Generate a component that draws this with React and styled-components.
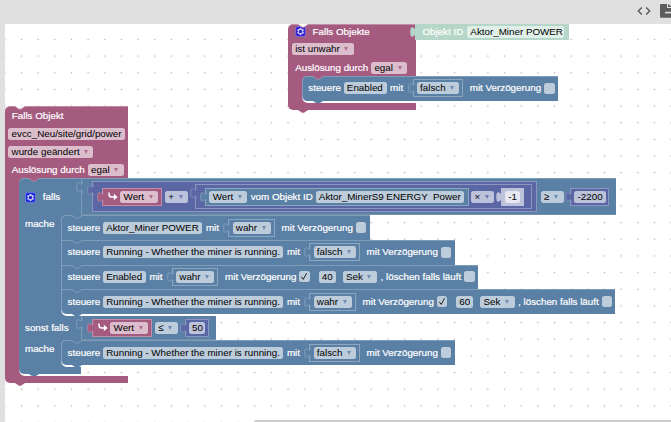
import React from 'react'
import styled, { createGlobalStyle } from 'styled-components'

const PINK = '#a55b80'
const BLUE = '#5b80a5'
const VIOLET = '#5b67a5'
const LIGHT = {
  [PINK]: '#c08ca6',
  [BLUE]: '#8ca6c0',
  [VIOLET]: '#8c95c0',
  '#bdc2db': '#bdc2db',
  '#b5d6c8': '#b5d6c8',
}

const GlobalStyle = createGlobalStyle`
  * { box-sizing: border-box; }
  body {
    margin: 0;
    overflow: hidden;
    font-family: "Liberation Sans", Arial, sans-serif;
    font-size: 9.8px;
    line-height: 12px;
  }
`
const Page = styled.div`
  display: flex;
  flex-direction: column;
  width: 671px;
  height: 422px;
  background: #e0e0e0;
`
const Toolbar = styled.div`
  display: flex;
  flex: none;
  height: 23.5px;
  padding-left: 636px;
  overflow: hidden;
`
const CodeIcon = styled.svg`
  flex: none;
  width: 16px;
  height: 16px;
  margin-top: 3px;
`
const FileIcon = styled.svg`
  flex: none;
  width: 16px;
  height: 16px;
  margin: 3px 0 0 8px;
`
const Workspace = styled.div`
  position: relative;
  flex: 1;
  margin-left: 5px;
  overflow: hidden;
  background-color: #fff;
  background-image: radial-gradient(circle at center, #bbb 0, #d4d4d4 0.7px, transparent 1.2px);
  background-size: 16.667px 16.667px;
  background-position: 8.2px 7.1px;
`
const ScrollBar = styled.div`
  position: absolute;
  left: 249px;
  right: 0;
  bottom: 0;
  height: 2px;
  border-radius: 2px 0 0 0;
  background: #ccc;
`
const Stack = styled.div`
  position: absolute;
  left: ${(p) => p.$x}px;
  top: ${(p) => p.$y}px;
  display: flex;
  flex-direction: column;
  align-items: flex-start;
  white-space: pre;
`
const HatBody = styled.div`
  position: relative;
  width: ${(p) => p.$w}px;
  background: ${PINK};
  border-top: 1px solid ${LIGHT[PINK]};
  border-top-left-radius: 5px;
`
const HatRow = styled.div`
  display: flex;
  align-items: center;
  height: ${(p) => p.$h}px;
  padding-left: ${(p) => p.$pl}px;
`
const Arm = styled.div`
  position: relative;
  width: ${(p) => p.$w}px;
  height: ${(p) => p.$h || 7}px;
  background: ${(p) => p.$color};
  border-bottom-left-radius: 5px;
`
const Mouth = styled.div`
  display: flex;
`
const Side = styled.div`
  flex: none;
  width: ${(p) => p.$w}px;
  padding: 3px 0 0 6.5px;
  background: ${(p) => p.$color};
  color: #fff;
  -webkit-text-stroke: 0.2px #fff;
`
const Inner = styled.div`
  position: relative;
  display: flex;
  flex-direction: column;
  align-items: flex-start;
  padding-bottom: 2px;
`
const CornerSvg = styled.svg`
  position: absolute;
  left: 0;
  width: 6px;
  height: 6px;
  ${(p) => (p.$top ? 'top: 0;' : 'bottom: 0;')}
`
const StatementBox = styled.div`
  position: relative;
  display: flex;
  align-items: center;
  height: ${(p) => p.$h}px;
  padding: 0 3.2px 1px 5.6px;
  background: ${BLUE};
  border-top: 1px solid #7f9cb9;
  border-left: 1px solid #7f9cb9;
  border-radius: ${(p) => (p.$first ? '5px' : '0')} 0 0 ${(p) => (p.$last ? '5px' : '0')};
`
const IfBox = styled.div`
  position: relative;
  display: flex;
  flex-direction: column;
  align-items: flex-start;
`
const IfHead = styled.div`
  position: relative;
  display: flex;
  align-items: center;
  height: ${(p) => p.$h}px;
  width: ${(p) => p.$w}px;
  padding-left: 6.5px;
  background: ${BLUE};
  border-top: ${(p) => (p.$first ? '1px solid #7f9cb9' : 'none')};
  border-top-left-radius: ${(p) => (p.$first ? '5px' : '0')};
`
const Compare = styled.div`
  position: relative;
  display: flex;
  align-items: center;
  flex: 1;
  align-self: stretch;
  padding-left: 10px;
  border-left: 1px solid #7f9cb9;
  border-bottom: 1px solid #7390af;
`
const ValueBox = styled.div`
  position: relative;
  display: flex;
  align-items: center;
  flex: none;
  width: ${(p) => p.$w}px;
  height: ${(p) => p.$h || 18}px;
  margin-left: ${(p) => p.$ml || 0}px;
  padding-left: ${(p) => (p.$pl === undefined ? 3.2 : p.$pl)}px;
  background: ${(p) => p.$color};
  border: 1px solid ${(p) => LIGHT[p.$color]};
`
const TabSvg = styled.svg`
  position: absolute;
  left: -6px;
  top: 2px;
  width: 7px;
  height: 12px;
`
const NotchSvg = styled.svg`
  position: absolute;
  left: 10px;
  width: 10px;
  height: 4px;
  ${(p) => (p.$bottom ? 'top: 100%;' : 'top: -1px;')}
`
const Label = styled.span`
  flex: none;
  width: ${(p) => p.$w}px;
  margin-left: ${(p) => p.$ml || 0}px;
  color: #fff;
  -webkit-text-stroke: 0.2px #fff;
`
const Field = styled.span`
  display: flex;
  align-items: center;
  flex: none;
  width: ${(p) => p.$w}px;
  height: 12px;
  margin-left: ${(p) => (p.$ml === undefined ? 3.4 : p.$ml)}px;
  padding-left: 3.2px;
  border-radius: 2.5px;
  background: rgba(255, 255, 255, 0.6);
  color: #000;
`
const Arrow = styled.i`
  width: 0;
  height: 0;
  margin-left: 4.6px;
  border: 2px solid transparent;
  border-top: 4px solid ${(p) => p.$color};
  border-bottom: 0;
  opacity: 0.8;
`
const CheckBox = styled.span`
  flex: none;
  width: 10.4px;
  height: 11px;
  margin-left: 3.4px;
  border-radius: 2.5px;
  background: #bdccdb;
  svg { display: block; width: 10px; height: 11px; }
`
const GearSvg = styled.svg`
  flex: none;
  width: 11px;
  height: 11px;
`
const ReturnSvg = styled.svg`
  flex: none;
  width: 10px;
  height: 9px;
`

const Gear = () => (
  <GearSvg viewBox="0 0 16 16">
    <rect x="0.5" y="0.5" width="15" height="15" rx="3.5" fill="#00f" fillOpacity="0.65" stroke="#8c93d8" />
    <path
      d="m4.203,7.296 0,1.368 -0.92,0.677 -0.11,0.41 0.9,1.559 0.41,0.11 1.043,-0.457 1.187,0.683 0.127,1.134 0.3,0.3 1.8,0 0.3,-0.299 0.127,-1.138 1.185,-0.682 1.046,0.458 0.409,-0.11 0.9,-1.559 -0.11,-0.41 -0.92,-0.677 0,-1.366 0.92,-0.677 0.11,-0.41 -0.9,-1.559 -0.409,-0.109 -1.046,0.458 -1.185,-0.682 -0.127,-1.138 -0.3,-0.299 -1.8,0 -0.3,0.3 -0.126,1.135 -1.187,0.682 -1.043,-0.457 -0.41,0.11 -0.899,1.559 0.108,0.409z"
      fill="#dfe0fa"
    />
    <circle cx="8" cy="8" r="2.7" fill="#2d2dc4" />
  </GearSvg>
)

const ReturnArrow = () => (
  <ReturnSvg viewBox="0 0 10 9">
    <path d="M1 0.5v1.7c0 1.8 1 2.8 2.8 2.8H7" fill="none" stroke="#fff" strokeWidth="1.5" />
    <path d="M5.8 1.8L9.6 5L5.8 8.2z" fill="#fff" />
  </ReturnSvg>
)

const Notch = ({ color, line = '#7f9cb9' }) => (
  <NotchSvg viewBox="0 0 10 4">
    <path d="M0 0L0 0.5L4 3.2L6 3.2L10 0.5L10 0z" fill={color} />
    <path d="M0 0.5L4 3.2L6 3.2L10 0.5" fill="none" stroke={line} />
  </NotchSvg>
)

const Bump = ({ color }) => (
  <NotchSvg $bottom viewBox="0 0 10 4">
    <path d="M0 0L4 2.8L6 2.8L10 0z" fill={color} />
  </NotchSvg>
)

const Tab = ({ color }) => (
  <TabSvg viewBox="0 0 7 12">
    <path d="M7 1H6C6 7.7 0.7 -4.3 0.7 6S6 4.3 6 11H7z" fill={color} />
    <path d="M6 0V1C6 7.7 0.7 -4.3 0.7 6S6 4.3 6 11V12" fill="none" stroke={LIGHT[color]} strokeWidth="0.8" />
  </TabSvg>
)

const Corners = ({ color }) => (
  <>
    <CornerSvg $top viewBox="0 0 6 6"><path d="M0 0H6A6 6 0 0 0 0 6z" fill={color} /></CornerSvg>
    <CornerSvg viewBox="0 0 6 6"><path d="M0 0A6 6 0 0 0 6 6H0z" fill={color} /></CornerSvg>
  </>
)

const Dropdown = ({ text, w, ml, color = BLUE }) => (
  <Field $w={w} $ml={ml}>{text}<Arrow $color={color} /></Field>
)

const Check = ({ checked }) => (
  <CheckBox>
    {checked && (
      <svg viewBox="0 0 10 11">
        <path d="M2.2 5.8L4.2 8.4L7.6 2.2" fill="none" stroke="#222" />
      </svg>
    )}
  </CheckBox>
)

const Value = ({ color = BLUE, w, h, ml, pl, children }) => (
  <ValueBox $color={color} $w={w} $h={h} $ml={ml} $pl={pl}>
    <Tab color={color} />
    {children}
  </ValueBox>
)

const Variable = ({ ml }) => (
  <Value color={PINK} w={60.5} ml={ml} pl={5.3}>
    <ReturnArrow />
    <Dropdown text="Wert" w={38} ml={2.3} color={PINK} />
  </Value>
)

const Steuere = ({ name, nameW, value, delay, first, last, above = BLUE, h = 24.67 }) => (
  <StatementBox $first={first} $last={last} $h={h}>
    <Notch color={above} line={above === PINK ? '#a98ba6' : undefined} />
    <Label $w={32}>steuere</Label>
    <Field $w={nameW}>{name}</Field>
    <Label $w={13} $ml={3.4}>mit</Label>
    <Value w={value === 'wahr' ? 46.5 : 50.5} ml={9.6}>
      <Dropdown text={value} w={value === 'wahr' ? 38.3 : 42.3} ml={0} />
    </Value>
    <Label $w={71} $ml={6.6}>mit Verzögerung</Label>
    <Check checked={!!delay} />
    {delay && (
      <>
        <Field $w={17.3} $ml={8.7}>{delay}</Field>
        <Dropdown text="Sek" w={34.5} ml={6.9} />
        <Label $w={80.4} $ml={3.4}>, löschen falls läuft</Label>
        <Check />
      </>
    )}
    {last && <Bump color={BLUE} />}
  </StatementBox>
)

const RUNNING = 'Running - Whether the miner is running.'

class App extends React.Component {
  render() {
    return (
      <Page>
        <GlobalStyle />
        <Toolbar>
          <CodeIcon viewBox="0 0 24 24">
            <path d="M9.4 16.6L4.8 12l4.6-4.6L8 6l-6 6 6 6 1.4-1.4zm5.2 0l4.6-4.6-4.6-4.6L16 6l6 6-6 6-1.4-1.4z" fill="#555" />
          </CodeIcon>
          <FileIcon viewBox="0 0 16 16">
            <path d="M0 2Q0 1 1 1H7V5H14V14.8H1Q0 14.8 0 13.8z" fill="#5c5c5c" />
            <path d="M8 1L12 4H8z" fill="#5c5c5c" />
            <path d="M5 9.6H14" stroke="#e0e0e0" strokeWidth="1.6" />
          </FileIcon>
        </Toolbar>
        <Workspace>
          <Stack $x={283.4} $y={0}>
            <HatBody $w={127.3}>
              <Notch color="#fff" line={LIGHT[PINK]} />
              <HatRow $h={14.6} $pl={6.2}>
                <Gear />
                <Label $w={97.8} $ml={7}>Falls Objekte</Label>
                <Value color="#b5d6c8" w={153.6} h={17} ml={5} pl={6}>
                  <Label $w={41.4}>Objekt ID</Label>
                  <Field $w={97}>Aktor_Miner POWER</Field>
                </Value>
              </HatRow>
              <HatRow $h={20.4} $pl={3.6}>
                <Dropdown text="ist unwahr" w={61.7} ml={0} color={PINK} />
              </HatRow>
              <HatRow $h={16.5} $pl={6.8}>
                <Label $w={73}>Auslösung durch</Label>
                <Dropdown text="egal" w={35.7} ml={3} color={PINK} />
              </HatRow>
            </HatBody>
            <Mouth>
              <Side $w={13.3} $color={PINK} />
              <Inner>
                <Corners color={PINK} />
                <Steuere name="Enabled" nameW={43} value="falsch" first last above={PINK} h={25} />
              </Inner>
            </Mouth>
            <Arm $w={127.3} $color={PINK}><Bump color={PINK} /></Arm>
          </Stack>

          <Stack $x={0} $y={82.9}>
            <HatBody $w={123.3}>
              <Notch color="#fff" line={LIGHT[PINK]} />
              <HatRow $h={18} $pl={6.8}><Label $w={60}>Falls Objekt</Label></HatRow>
              <HatRow $h={17.6} $pl={3.4}><Field $w={116.6} $ml={0}>evcc_Neu/site/grid/power</Field></HatRow>
              <HatRow $h={18.4} $pl={3.4}>
                <Dropdown text="wurde geändert" w={85} ml={0} color={PINK} />
              </HatRow>
              <HatRow $h={16.6} $pl={6.8}>
                <Label $w={72.7}>Auslösung durch</Label>
                <Dropdown text="egal" w={35.7} color={PINK} />
              </HatRow>
            </HatBody>
            <Mouth>
              <Side $w={13.5} $color={PINK} />
              <Inner>
                <Corners color={PINK} />
                <IfBox>
                  <IfHead $first $h={37.3} $w={597.5}>
                    <Notch color={PINK} line="#a98ba6" />
                    <Gear />
                    <Label $w={38} $ml={6.8}>falls</Label>
                    <Compare>
                      <Tab color={BLUE} />
                      <Value color={VIOLET} w={445} h={31} pl={9}>
                        <Variable />
                        <Dropdown text="+" w={23} ml={2.8} color={VIOLET} />
                        <Value color={VIOLET} w={336.5} h={25} ml={7} pl={9.2}>
                          <Value w={263.3}>
                            <Dropdown text="Wert" w={38} ml={0} />
                            <Label $w={62} $ml={3.2}>vom Objekt ID</Label>
                            <Field $w={148.6} $ml={3}>Aktor_MinerS9 ENERGY  Power</Field>
                          </Value>
                          <Dropdown text="×" w={23} ml={2.8} color={VIOLET} />
                          <Value color="#bdc2db" w={22.5} ml={6.8} pl={2.8}>
                            <Field $w={15.5} $ml={0}>-1</Field>
                          </Value>
                        </Value>
                      </Value>
                      <Dropdown text="≥" w={23} ml={4} />
                      <Value color={VIOLET} w={39} ml={6.4}>
                        <Field $w={31.4} $ml={0}>-2200</Field>
                      </Value>
                    </Compare>
                  </IfHead>
                  <Mouth>
                    <Side $w={42.5} $color={BLUE}>mache</Side>
                    <Inner>
                      <Corners color={BLUE} />
                      <Steuere name="Aktor_Miner POWER" nameW={99.5} value="wahr" first />
                      <Steuere name={RUNNING} nameW={180.5} value="falsch" />
                      <Steuere name="Enabled" nameW={43} value="wahr" delay="40" />
                      <Steuere name={RUNNING} nameW={180.5} value="wahr" delay="60" last />
                    </Inner>
                  </Mouth>
                  <IfHead $h={24.4} $w={197.5}>
                    <Label $w={55.8}>sonst falls</Label>
                    <Compare>
                      <Tab color={BLUE} />
                      <Variable />
                      <Dropdown text="≤" w={23} ml={2.8} />
                      <Value color={VIOLET} w={24} ml={6.6}>
                        <Field $w={16.5} $ml={0}>50</Field>
                      </Value>
                    </Compare>
                  </IfHead>
                  <Mouth>
                    <Side $w={42.5} $color={BLUE}>mache</Side>
                    <Inner>
                      <Corners color={BLUE} />
                      <Steuere name={RUNNING} nameW={180.5} value="falsch" first last />
                    </Inner>
                  </Mouth>
                  <Arm $w={62.5} $h={6.6} $color={BLUE}><Bump color={BLUE} /></Arm>
                </IfBox>
              </Inner>
            </Mouth>
            <Arm $w={123.3} $color={PINK}><Bump color={PINK} /></Arm>
          </Stack>
          <ScrollBar />
        </Workspace>
      </Page>
    )
  }
}

export default App
